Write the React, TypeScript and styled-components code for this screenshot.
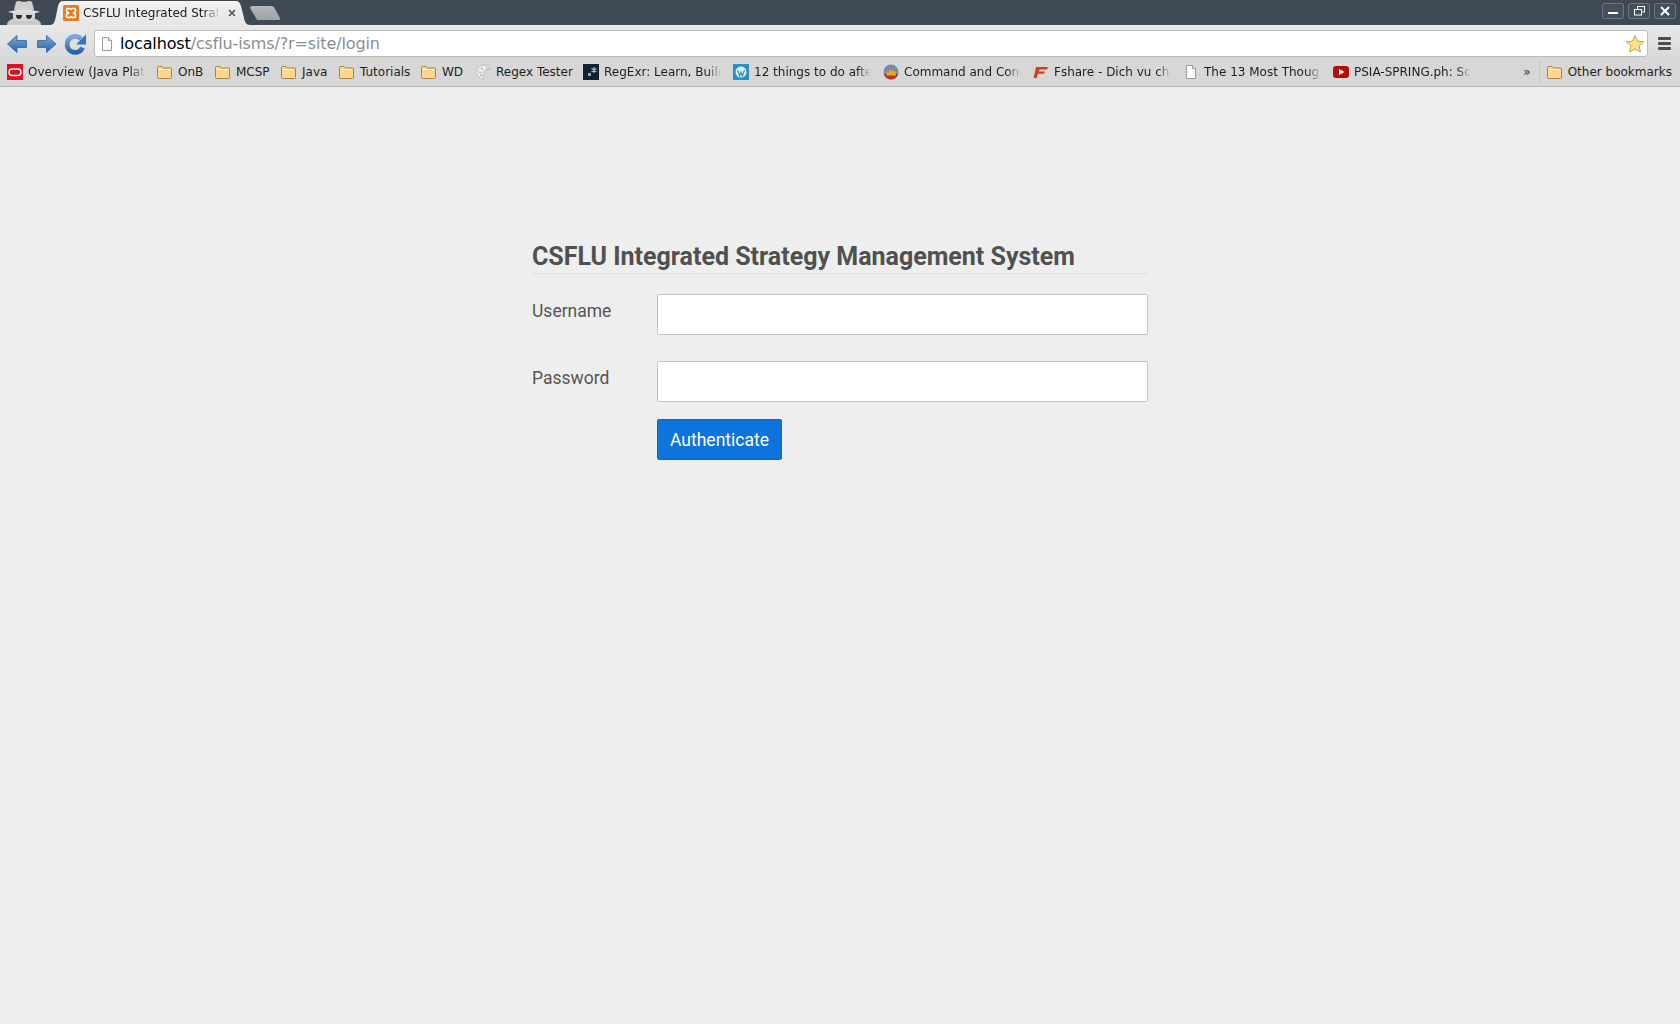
import React from "react";
import styled, { createGlobalStyle } from "styled-components";

const GlobalStyle = createGlobalStyle`
  html, body {
    margin: 0;
    padding: 0;
    height: 100%;
    background: #eeeeee;
  }
  #root { height: 100%; }
  * { box-sizing: border-box; }
`;

const Page = styled.div`
  display: flex;
  flex-direction: column;
  height: 1024px;
  overflow: hidden;
  background: #eeeeee;
`;

/* browser chrome */
const TitleBar = styled.div`
  display: flex;
  align-items: flex-end;
  height: 25px;
  background: #3f4954;
`;

const Incognito = styled.svg`
  width: 36px;
  height: 25px;
  margin-left: 6px;
  flex: none;
`;

const Tab = styled.div`
  display: flex;
  align-items: center;
  width: 200px;
  height: 24px;
  margin-left: 8px;
  padding: 0 0 0 13px;
  background: linear-gradient(#f2f2f2, #e6e6e6);
  clip-path: path("M0 24 C4 24 5 20 6 15 L8 5 C9 2 10 0 13 0 L186 0 C189 0 190 2 191 5 L194 17 C195 21 196 24 200 24 Z");
  flex: none;
`;

const TabTitle = styled.span`
  width: 137px;
  margin-left: 4px;
  overflow: hidden;
  white-space: nowrap;
  font: 12px "DejaVu Sans", sans-serif;
  color: #222;
  -webkit-mask-image: linear-gradient(to right, #000 88%, transparent);
  mask-image: linear-gradient(to right, #000 88%, transparent);
`;

const TabClose = styled.svg`
  width: 8px;
  height: 8px;
  margin-left: 8px;
  flex: none;
`;

const NewTab = styled.div`
  width: 30px;
  height: 14px;
  margin: 0 0 5px 0;
  background: linear-gradient(#b4b8bc, #9da2a7);
  clip-path: path("M2 0 L21 0 C23 0 24 1 25 3 L30 12 C30.500 13.500 30 14 28 14 L9 14 C7 14 6.500 13.500 6 12 L0 2 C0 1 1 0 2 0 Z");
  flex: none;
`;

const WindowButtons = styled.div`
  display: flex;
  gap: 4px;
  margin-left: auto;
  padding: 0 4px 6px 0;
  align-self: flex-end;
`;

const WindowButton = styled.div`
  display: flex;
  align-items: center;
  justify-content: center;
  width: 22px;
  height: 16px;
  border: 1px solid #6d7680;
  border-radius: 2px;
  background: #46505b;
`;

const Toolbar = styled.div`
  display: flex;
  align-items: center;
  height: 32px;
  padding: 5px 7px 0;
  background: linear-gradient(#e8e8e8, #dadada);
`;

const NavIcon = styled.svg`
  width: 22px;
  height: 22px;
  margin-right: 7px;
  flex: none;
`;

const Omnibox = styled.div`
  display: flex;
  align-items: center;
  width: 1554px;
  height: 27px;
  padding: 0 2px 0 4px;
  background: #fff;
  border: 1px solid #bcbcbc;
  border-radius: 3px;
  flex: none;
`;

const Url = styled.span`
  margin-left: 5px;
  font: 16px "DejaVu Sans", sans-serif;
  color: #868e96;
  white-space: nowrap;
  letter-spacing: -0.13px;
`;

const Host = styled.span`
  color: #000;
`;

const Star = styled.svg`
  width: 20px;
  height: 20px;
  margin-left: auto;
`;

const Menu = styled.div`
  display: flex;
  flex-direction: column;
  gap: 2px;
  margin-left: 10px;
  width: 13px;
  flex: none;
`;

const MenuBar = styled.span`
  height: 3px;
  background: #4c4c4c;
  border-radius: 1px;
`;

const BookmarkBar = styled.div`
  display: flex;
  align-items: center;
  height: 30px;
  padding: 0 8px 0 7px;
  background: #d7d7d7;
  border-bottom: 1px solid #b4b4b4;
`;

const Bookmark = styled.div<{ $last?: boolean }>`
  display: flex;
  align-items: center;
  gap: 5px;
  margin-right: ${(p) => (p.$last ? 0 : 12)}px;
  flex: none;
`;

const BookmarkLabel = styled.span<{ $width?: number; $cut?: boolean }>`
  width: ${(p) => (p.$width ? `${p.$width}px` : "auto")};
  font: 12px "DejaVu Sans", sans-serif;
  color: #1e1e1e;
  white-space: nowrap;
  ${(p) =>
    p.$cut &&
    `
    overflow: hidden;
    -webkit-mask-image: linear-gradient(to right, #000 88%, transparent);
    mask-image: linear-gradient(to right, #000 88%, transparent);
  `}
`;

const Chevron = styled.span`
  margin-left: auto;
  padding-right: 8px;
  border-right: 1px solid #c6c6c6;
  margin-right: 7px;
  font: 12px "DejaVu Sans", sans-serif;
  color: #333;
  line-height: 22px;
`;

/* login form */
const Content = styled.main`
  flex: 1;
  width: 616px;
  margin-left: 532px;
  padding-top: 154px;
  font-family: Roboto, "Liberation Sans", sans-serif;
`;

const Heading = styled.h1`
  margin: 0 0 20px;
  border-bottom: 1px solid #e0e0e0;
  font-size: 25px;
  line-height: 32px;
  font-weight: 700;
  color: #505050;
`;

const FormRow = styled.div`
  display: flex;
  margin-bottom: 26px;
`;

const Label = styled.label`
  width: 125px;
  padding-top: 5px;
  font-size: 17.5px;
  line-height: 24px;
  color: #555;
  flex: none;
`;

const Input = styled.input`
  width: 491px;
  height: 41px;
  background: #fff;
  border: 1px solid #c4c4c4;
  border-radius: 2px;
`;

const Actions = styled.div`
  margin: -9px 0 0 125px;
`;

const SubmitButton = styled.button`
  width: 125px;
  height: 41px;
  padding: 0;
  background: #0f73dc;
  border: 1px solid #0d68c8;
  border-radius: 2px;
  color: #fff;
  font: 17.5px Roboto, "Liberation Sans", sans-serif;
`;

/* icons */
const Folder = () => (
  <svg width="16" height="16" viewBox="0 0 16 16">
    <path d="M.5 13.500V3.500a1 1 0 0 1 1-1h3.500l1.500 1.500h7a1 1 0 0 1 1 1v8.500a1 1 0 0 1-1 1h-12a1 1 0 0 1-1-1z" fill="#fbd793" stroke="#a98148" />
    <path d="M1.500 5.500h12" stroke="#fff0cf" />
  </svg>
);

const PageIcon = () => (
  <svg width="16" height="16" viewBox="0 0 16 16">
    <path d="M3.500 1.500h6l3 3v10h-9z" fill="#fafafa" stroke="#9a9a9a" />
    <path d="M9.500 1.500v3h3" fill="#e4e4e4" stroke="#9a9a9a" />
  </svg>
);

const OracleIcon = () => (
  <svg width="16" height="16" viewBox="0 0 16 16">
    <rect width="16" height="16" fill="#e2101c" />
    <rect x="2" y="5" width="12" height="6.500" rx="3.200" fill="none" stroke="#fff" strokeWidth="1.500" />
  </svg>
);

const RegexIcon = () => (
  <svg width="16" height="16" viewBox="0 0 16 16">
    <path d="M8 1c3 0 6 1 7 3l-3 2-2 0-2 2 0 3 1 4c-3 0-6-2-7-5-1-4 2-9 6-9z" fill="#ececec" stroke="#a8a8a8" strokeWidth=".8" strokeDasharray="1.500 .8" />
    <path d="M6 4l2 1M4 8l2 1M5 11l2 1" stroke="#9c9c9c" />
    <path d="M11 3h2M12 5h3" stroke="#8c8c8c" strokeDasharray="1 1" />
  </svg>
);

const RegExrIcon = () => (
  <svg width="16" height="16" viewBox="0 0 16 16">
    <rect width="16" height="16" fill="#14202a" />
    <rect x="5" y="9" width="3" height="3" fill="#5bb8e4" />
    <path d="M11 3v6M8.500 4.500l5 3M13.500 4.500l-5 3" stroke="#7fd0f2" strokeWidth="1.200" />
  </svg>
);

const WordPressIcon = () => (
  <svg width="16" height="16" viewBox="0 0 16 16">
    <rect width="16" height="16" fill="#2a8fc4" />
    <circle cx="8" cy="8" r="5.500" fill="#e8f3f9" />
    <path d="M4.500 6l2.200 6 1.300-4 1.400 4 2.100-6" fill="none" stroke="#2a8fc4" strokeWidth="1.200" />
  </svg>
);

const FireIcon = () => (
  <svg width="16" height="16" viewBox="0 0 16 16">
    <circle cx="8" cy="8" r="7.500" fill="#6f8ba8" />
    <path d="M.8 10a7.500 7.500 0 0 0 14.400 0z" fill="#b03a22" />
    <path d="M3.500 11.500L4 7l1.500 1.500L7 4l1 3.500L10 5l1 3 1.500-1.500.5 5z" fill="#f2a21e" />
  </svg>
);

const FshareIcon = () => (
  <svg width="16" height="16" viewBox="0 0 16 16">
    <path d="M3 3h12l-1 2.500H6.500l-.6 2H12l-1 2.300H5.100L3.800 14H.5z" fill="#c8451f" />
  </svg>
);

const YouTubeIcon = () => (
  <svg width="16" height="16" viewBox="0 0 16 16">
    <rect y="2" width="16" height="12" rx="3" fill="#b3100c" />
    <path d="M6 5l5.500 3L6 11z" fill="#fff" />
  </svg>
);

const bookmarks = [
  { label: "Overview (Java Platform", icon: <OracleIcon />, width: 117, cut: true },
  { label: "OnB", icon: <Folder />, width: 25 },
  { label: "MCSP", icon: <Folder />, width: 33 },
  { label: "Java", icon: <Folder />, width: 25 },
  { label: "Tutorials", icon: <Folder />, width: 49 },
  { label: "WD", icon: <Folder />, width: 21 },
  { label: "Regex Tester", icon: <RegexIcon />, width: 75 },
  { label: "RegExr: Learn, Build, & Test", icon: <RegExrIcon />, width: 117, cut: true },
  { label: "12 things to do after installing", icon: <WordPressIcon />, width: 117, cut: true },
  { label: "Command and Conquer", icon: <FireIcon />, width: 117, cut: true },
  { label: "Fshare - Dich vu chia se", icon: <FshareIcon />, width: 117, cut: true },
  { label: "The 13 Most Thought", icon: <PageIcon />, width: 117, cut: true },
  { label: "PSIA-SPRING.ph: Schedule", icon: <YouTubeIcon />, width: 117, cut: true },
];

export default function App() {
  return (
    <Page>
      <GlobalStyle />
      <TitleBar>
        <Incognito viewBox="0 0 36 25">
          <path d="M8 10L10 2c2-2 5 0 8 0s6-2 8 0l2 8z" fill="#cfcfcf" />
          <path d="M2 12c7-3 25-3 32 0-7 2.500-25 2.500-32 0z" fill="#dedede" />
          <path d="M1 25c0-4 4-6 9-7h16c5 1 9 3 9 7z" fill="#cacaca" />
          <path d="M7 13h22v5c-3 4-19 4-22 0z" fill="#d6d6d6" />
          <path d="M10 15h6c0 2.500-1 4-3 4s-3-1.500-3-4zM20 15h6c0 2-1 4-3 4s-3-1.500-3-4z" fill="#2e2e2e" />
        </Incognito>
        <Tab>
          <svg width="16" height="16" viewBox="0 0 16 16">
            <rect width="16" height="16" rx="1.500" fill="#ed7a22" />
            <path d="M5 3.500h1.500a1.500 1.500 0 0 1 1.500 1.500 1.500 1.500 0 0 1 1.500-1.500H11a1.500 1.500 0 0 1 1.500 1.500v1A1.500 1.500 0 0 1 11 7.500a.5.5 0 0 0 0 1A1.500 1.500 0 0 1 12.500 10v1a1.500 1.500 0 0 1-1.500 1.500H9.500A1.500 1.500 0 0 1 8 11a1.500 1.500 0 0 1-1.500 1.500H5A1.500 1.500 0 0 1 3.500 11v-1A1.500 1.500 0 0 1 5 8.500a.5.5 0 0 0 0-1A1.500 1.500 0 0 1 3.500 6V5A1.500 1.500 0 0 1 5 3.500z" fill="none" stroke="#fff" strokeWidth="1.600" />
          </svg>
          <TabTitle>CSFLU Integrated Strategy</TabTitle>
          <TabClose viewBox="0 0 8 8">
            <path d="M1 1l6 6M7 1L1 7" stroke="#555" strokeWidth="1.600" />
          </TabClose>
        </Tab>
        <NewTab />
        <WindowButtons>
          <WindowButton>
            <svg width="10" height="8" viewBox="0 0 10 8"><rect y="5" width="10" height="2" fill="#fff" /></svg>
          </WindowButton>
          <WindowButton>
            <svg width="11" height="10" viewBox="0 0 11 10" fill="none" stroke="#fff">
              <rect x="3.500" y=".5" width="7" height="5.500" />
              <rect x=".5" y="3.500" width="7" height="5.500" fill="#46505b" />
            </svg>
          </WindowButton>
          <WindowButton>
            <svg width="10" height="10" viewBox="0 0 10 10"><path d="M1 1l8 8M9 1l-8 8" stroke="#fff" strokeWidth="2" /></svg>
          </WindowButton>
        </WindowButtons>
      </TitleBar>

      <Toolbar>
        <NavIcon viewBox="0 0 22 22">
          <defs>
            <linearGradient id="nav" x1="0" y1="0" x2="0" y2="1">
              <stop offset="0" stopColor="#7ea9dc" />
              <stop offset="1" stopColor="#2a62a6" />
            </linearGradient>
          </defs>
          <path d="M.5 11L10 2.500v5h9.500v7H10v5z" fill="url(#nav)" stroke="#34659e" strokeWidth=".8" strokeLinejoin="round" />
        </NavIcon>
        <NavIcon viewBox="0 0 22 22">
          <path d="M20 11l-9.500-8.500v5h-9v7h9v5z" fill="url(#nav)" stroke="#34659e" strokeWidth=".8" strokeLinejoin="round" />
        </NavIcon>
        <NavIcon viewBox="0 0 22 22">
          <path d="M17.500 14.500a8 8 0 1 1-1.500-8.500" fill="none" stroke="url(#nav)" strokeWidth="4.800" />
          <path d="M21 1.500v10H11z" fill="#3b74b6" />
        </NavIcon>
        <Omnibox>
          <PageIcon />
          <Url><Host>localhost</Host>/csflu-isms/?r=site/login</Url>
          <Star viewBox="0 0 20 20">
            <path d="M10 1.500l2.600 5.600 6 .7-4.400 4.100 1.200 6L10 15l-5.400 2.900 1.200-6L1.400 7.800l6-.7z" fill="#fce38a" stroke="#c8a050" strokeLinejoin="round" />
          </Star>
        </Omnibox>
        <Menu>
          <MenuBar />
          <MenuBar />
          <MenuBar />
        </Menu>
      </Toolbar>

      <BookmarkBar>
        {bookmarks.map((b) => (
          <Bookmark key={b.label}>
            {b.icon}
            <BookmarkLabel $width={b.width} $cut={b.cut}>{b.label}</BookmarkLabel>
          </Bookmark>
        ))}
        <Chevron>»</Chevron>
        <Bookmark $last>
          <Folder />
          <BookmarkLabel>Other bookmarks</BookmarkLabel>
        </Bookmark>
      </BookmarkBar>

      <Content>
        <form>
          <Heading>CSFLU Integrated Strategy Management System</Heading>
          <FormRow>
            <Label>Username</Label>
            <Input type="text" />
          </FormRow>
          <FormRow>
            <Label>Password</Label>
            <Input type="password" />
          </FormRow>
          <Actions>
            <SubmitButton type="button">Authenticate</SubmitButton>
          </Actions>
        </form>
      </Content>
    </Page>
  );
}
